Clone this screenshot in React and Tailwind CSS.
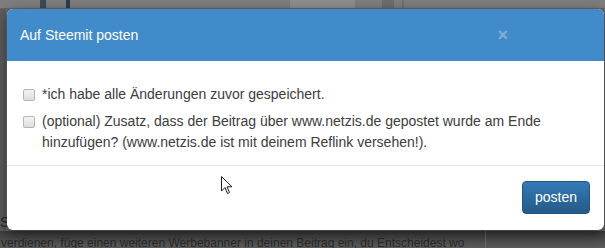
export default function App() {
  return (
    <div className="relative w-[605px] h-[248px] overflow-hidden bg-[#6a6a6a] font-['Liberation_Sans',Arial,sans-serif]">
      {/* page behind the backdrop */}
      <div className="flex h-full flex-col">
        <div className="flex h-[9px] items-end bg-[#7e7e7e] border-b border-[#6c6460]">
          <div className="ml-[40px] h-[8px] w-[6px] bg-[#3e4b5c]" />
          <div className="ml-[20px] h-[8px] w-[4px] bg-[#2f3d52]" />
          <div className="ml-[220px] h-[8px] w-[65px] bg-[#8e8e8e]" />
          <div className="ml-[27px] h-[8px] w-[12px] bg-[#6e6e6e]" />
          <div className="ml-[8px] h-[8px] w-[2px] bg-[#707070]" />
        </div>
        <div className="flex flex-1">
          <div className="w-[7px] bg-[#5e5e5e] border-r border-[#707070]" />
          <div className="flex-1" />
        </div>
        <div className="relative h-[17px] overflow-hidden bg-gradient-to-b from-[#3e3e3e] to-[#5c5c5c]">
          <div className="absolute left-[485px] top-0 h-full w-px bg-[#6e6e6e]" />
          <p className="pl-[1px] pt-[5px] text-[12px] leading-[14px] text-[#2a2a2a] whitespace-nowrap">
            verdienen, füge einen weiteren Werbebanner in deinen Beitrag ein, du Entscheidest wo
          </p>
        </div>
      </div>
      <span className="absolute left-0 top-[214px] text-[14px] leading-[16px] text-[#2a2a2a]">S</span>

      {/* modal */}
      <div className="absolute left-[7px] top-[9px] w-[597px] rounded-[6px] bg-white shadow-[0_4px_14px_rgba(0,0,0,0.55)]">
        <div className="flex h-[52px] items-center justify-between rounded-t-[6px] bg-[#428bca] pl-[13px] pr-[96px]">
          <h4 className="text-[14px] text-white">Auf Steemit posten</h4>
          <span className="text-[18px] font-bold leading-none text-[#86acd3]">×</span>
        </div>
        <div className="border-b border-[#e5e5e5] pl-[16px] pr-[16px] pt-[23px] pb-[12px] text-[14px] leading-[21px] text-[#3c3c3c]">
          <label className="flex items-start">
            <span className="mt-[5px] mr-[7px] h-[12px] w-[12px] shrink-0 rounded-[2px] border border-[#b5b5b5] bg-gradient-to-b from-[#f4f4f4] to-[#dcdcdc]" />
            <span>*ich habe alle Änderungen zuvor gespeichert.</span>
          </label>
          <label className="mt-[6px] flex items-start">
            <span className="mt-[5px] mr-[7px] h-[12px] w-[12px] shrink-0 rounded-[2px] border border-[#b5b5b5] bg-gradient-to-b from-[#f4f4f4] to-[#dcdcdc]" />
            <span className="w-[545px]">
              (optional) Zusatz, dass der Beitrag über www.netzis.de gepostet wurde am Ende hinzufügen? (www.netzis.de ist mit deinem Reflink versehen!).
            </span>
          </label>
        </div>
        <div className="relative flex justify-end pt-[15px] pb-[16px] pr-[14px]">
          <button className="h-[33px] w-[68px] rounded-[4px] border border-[#245580] bg-gradient-to-b from-[#337ab7] to-[#265a88] text-[14px] text-white">
            posten
          </button>
          <svg className="absolute left-[214px] top-[10px]" width="12" height="19" viewBox="0 0 12 19">
            <path d="M0.5 0.5 L0.5 15 L4 11.5 L6.5 17.5 L8.5 16.5 L6 10.8 L11 10.8 Z" fill="white" stroke="#222" strokeWidth="1" />
          </svg>
        </div>
      </div>
    </div>
  )
}
